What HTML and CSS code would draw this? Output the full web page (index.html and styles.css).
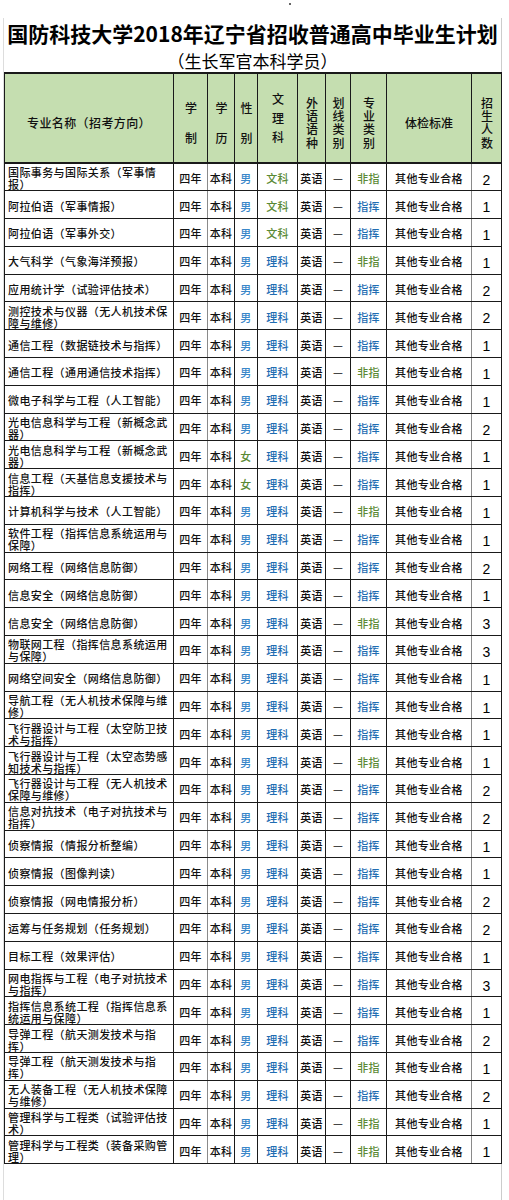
FILE: index.html
```html
<!DOCTYPE html>
<html lang="zh-CN">
<head>
<meta charset="utf-8">
<title>国防科技大学2018年辽宁省招收普通高中毕业生计划</title>
<link rel="stylesheet" href="styles.css">
</head>
<body>
<div class="topbar"><span class="dot"></span></div>
<div class="sheet">
  <h1 class="title">国防科技大学2018年辽宁省招收普通高中毕业生计划</h1>
  <p class="subtitle">（生长军官本科学员）</p>
  <table class="plan">
    <colgroup>
      <col class="c-name"><col class="c-len"><col class="c-deg"><col class="c-sex"><col class="c-subj">
      <col class="c-lang"><col class="c-line"><col class="c-type"><col class="c-med"><col class="c-num">
    </colgroup>
    <thead>
      <tr>
        <th class="h-name">专业名称（招考方向）</th>
        <th><span class="vt wide">学制</span></th>
        <th><span class="vt wide">学历</span></th>
        <th><span class="vt wide">性别</span></th>
        <th><span class="vt three">文理科</span></th>
        <th><span class="vt four">外语语种</span></th>
        <th><span class="vt four">划线类别</span></th>
        <th><span class="vt four">专业类别</span></th>
        <th>体检标准</th>
        <th><span class="vt four">招生人数</span></th>
      </tr>
    </thead>
    <tbody>
      <tr><td class="name">国际事务与国际关系（军事情报）</td><td>四年</td><td>本科</td><td class="m">男</td><td class="g">文科</td><td>英语</td><td>—</td><td class="g">非指</td><td>其他专业合格</td><td class="num">2</td></tr>
      <tr><td class="name">阿拉伯语（军事情报）</td><td>四年</td><td>本科</td><td class="m">男</td><td class="g">文科</td><td>英语</td><td>—</td><td class="b">指挥</td><td>其他专业合格</td><td class="num">1</td></tr>
      <tr><td class="name">阿拉伯语（军事外交）</td><td>四年</td><td>本科</td><td class="m">男</td><td class="g">文科</td><td>英语</td><td>—</td><td class="b">指挥</td><td>其他专业合格</td><td class="num">1</td></tr>
      <tr><td class="name">大气科学（气象海洋预报）</td><td>四年</td><td>本科</td><td class="m">男</td><td class="b">理科</td><td>英语</td><td>—</td><td class="g">非指</td><td>其他专业合格</td><td class="num">1</td></tr>
      <tr><td class="name">应用统计学（试验评估技术）</td><td>四年</td><td>本科</td><td class="m">男</td><td class="b">理科</td><td>英语</td><td>—</td><td class="b">指挥</td><td>其他专业合格</td><td class="num">2</td></tr>
      <tr><td class="name">测控技术与仪器（无人机技术保障与维修）</td><td>四年</td><td>本科</td><td class="m">男</td><td class="b">理科</td><td>英语</td><td>—</td><td class="b">指挥</td><td>其他专业合格</td><td class="num">2</td></tr>
      <tr><td class="name">通信工程（数据链技术与指挥）</td><td>四年</td><td>本科</td><td class="m">男</td><td class="b">理科</td><td>英语</td><td>—</td><td class="b">指挥</td><td>其他专业合格</td><td class="num">1</td></tr>
      <tr><td class="name">通信工程（通用通信技术指挥）</td><td>四年</td><td>本科</td><td class="m">男</td><td class="b">理科</td><td>英语</td><td>—</td><td class="g">非指</td><td>其他专业合格</td><td class="num">1</td></tr>
      <tr><td class="name">微电子科学与工程（人工智能）</td><td>四年</td><td>本科</td><td class="m">男</td><td class="b">理科</td><td>英语</td><td>—</td><td class="b">指挥</td><td>其他专业合格</td><td class="num">1</td></tr>
      <tr><td class="name">光电信息科学与工程（新概念武器）</td><td>四年</td><td>本科</td><td class="m">男</td><td class="b">理科</td><td>英语</td><td>—</td><td class="b">指挥</td><td>其他专业合格</td><td class="num">2</td></tr>
      <tr><td class="name">光电信息科学与工程（新概念武器）</td><td>四年</td><td>本科</td><td class="g">女</td><td class="b">理科</td><td>英语</td><td>—</td><td class="b">指挥</td><td>其他专业合格</td><td class="num">1</td></tr>
      <tr><td class="name">信息工程（天基信息支援技术与指挥）</td><td>四年</td><td>本科</td><td class="g">女</td><td class="b">理科</td><td>英语</td><td>—</td><td class="b">指挥</td><td>其他专业合格</td><td class="num">1</td></tr>
      <tr><td class="name">计算机科学与技术（人工智能）</td><td>四年</td><td>本科</td><td class="m">男</td><td class="b">理科</td><td>英语</td><td>—</td><td class="g">非指</td><td>其他专业合格</td><td class="num">1</td></tr>
      <tr><td class="name">软件工程（指挥信息系统运用与保障）</td><td>四年</td><td>本科</td><td class="m">男</td><td class="b">理科</td><td>英语</td><td>—</td><td class="b">指挥</td><td>其他专业合格</td><td class="num">1</td></tr>
      <tr><td class="name">网络工程（网络信息防御）</td><td>四年</td><td>本科</td><td class="m">男</td><td class="b">理科</td><td>英语</td><td>—</td><td class="b">指挥</td><td>其他专业合格</td><td class="num">2</td></tr>
      <tr><td class="name">信息安全（网络信息防御）</td><td>四年</td><td>本科</td><td class="m">男</td><td class="b">理科</td><td>英语</td><td>—</td><td class="b">指挥</td><td>其他专业合格</td><td class="num">1</td></tr>
      <tr><td class="name">信息安全（网络信息防御）</td><td>四年</td><td>本科</td><td class="m">男</td><td class="b">理科</td><td>英语</td><td>—</td><td class="g">非指</td><td>其他专业合格</td><td class="num">3</td></tr>
      <tr><td class="name">物联网工程（指挥信息系统运用与保障）</td><td>四年</td><td>本科</td><td class="m">男</td><td class="b">理科</td><td>英语</td><td>—</td><td class="b">指挥</td><td>其他专业合格</td><td class="num">3</td></tr>
      <tr><td class="name">网络空间安全（网络信息防御）</td><td>四年</td><td>本科</td><td class="m">男</td><td class="b">理科</td><td>英语</td><td>—</td><td class="b">指挥</td><td>其他专业合格</td><td class="num">1</td></tr>
      <tr><td class="name">导航工程（无人机技术保障与维修）</td><td>四年</td><td>本科</td><td class="m">男</td><td class="b">理科</td><td>英语</td><td>—</td><td class="b">指挥</td><td>其他专业合格</td><td class="num">1</td></tr>
      <tr><td class="name">飞行器设计与工程（太空防卫技术与指挥）</td><td>四年</td><td>本科</td><td class="m">男</td><td class="b">理科</td><td>英语</td><td>—</td><td class="b">指挥</td><td>其他专业合格</td><td class="num">1</td></tr>
      <tr><td class="name">飞行器设计与工程（太空态势感知技术与指挥）</td><td>四年</td><td>本科</td><td class="m">男</td><td class="b">理科</td><td>英语</td><td>—</td><td class="g">非指</td><td>其他专业合格</td><td class="num">1</td></tr>
      <tr><td class="name">飞行器设计与工程（无人机技术保障与维修）</td><td>四年</td><td>本科</td><td class="m">男</td><td class="b">理科</td><td>英语</td><td>—</td><td class="b">指挥</td><td>其他专业合格</td><td class="num">2</td></tr>
      <tr><td class="name">信息对抗技术（电子对抗技术与指挥）</td><td>四年</td><td>本科</td><td class="m">男</td><td class="b">理科</td><td>英语</td><td>—</td><td class="b">指挥</td><td>其他专业合格</td><td class="num">2</td></tr>
      <tr><td class="name">侦察情报（情报分析整编）</td><td>四年</td><td>本科</td><td class="m">男</td><td class="b">理科</td><td>英语</td><td>—</td><td class="b">指挥</td><td>其他专业合格</td><td class="num">1</td></tr>
      <tr><td class="name">侦察情报（图像判读）</td><td>四年</td><td>本科</td><td class="m">男</td><td class="b">理科</td><td>英语</td><td>—</td><td class="b">指挥</td><td>其他专业合格</td><td class="num">1</td></tr>
      <tr><td class="name">侦察情报（网电情报分析）</td><td>四年</td><td>本科</td><td class="m">男</td><td class="b">理科</td><td>英语</td><td>—</td><td class="b">指挥</td><td>其他专业合格</td><td class="num">2</td></tr>
      <tr><td class="name">运筹与任务规划（任务规划）</td><td>四年</td><td>本科</td><td class="m">男</td><td class="b">理科</td><td>英语</td><td>—</td><td class="b">指挥</td><td>其他专业合格</td><td class="num">2</td></tr>
      <tr><td class="name">目标工程（效果评估）</td><td>四年</td><td>本科</td><td class="m">男</td><td class="b">理科</td><td>英语</td><td>—</td><td class="b">指挥</td><td>其他专业合格</td><td class="num">1</td></tr>
      <tr><td class="name">网电指挥与工程（电子对抗技术与指挥）</td><td>四年</td><td>本科</td><td class="m">男</td><td class="b">理科</td><td>英语</td><td>—</td><td class="b">指挥</td><td>其他专业合格</td><td class="num">3</td></tr>
      <tr><td class="name">指挥信息系统工程（指挥信息系统运用与保障）</td><td>四年</td><td>本科</td><td class="m">男</td><td class="b">理科</td><td>英语</td><td>—</td><td class="b">指挥</td><td>其他专业合格</td><td class="num">1</td></tr>
      <tr><td class="name">导弹工程（航天测发技术与指挥）</td><td>四年</td><td>本科</td><td class="m">男</td><td class="b">理科</td><td>英语</td><td>—</td><td class="b">指挥</td><td>其他专业合格</td><td class="num">2</td></tr>
      <tr><td class="name">导弹工程（航天测发技术与指挥）</td><td>四年</td><td>本科</td><td class="m">男</td><td class="b">理科</td><td>英语</td><td>—</td><td class="g">非指</td><td>其他专业合格</td><td class="num">1</td></tr>
      <tr><td class="name">无人装备工程（无人机技术保障与维修）</td><td>四年</td><td>本科</td><td class="m">男</td><td class="b">理科</td><td>英语</td><td>—</td><td class="b">指挥</td><td>其他专业合格</td><td class="num">2</td></tr>
      <tr><td class="name">管理科学与工程类（试验评估技术）</td><td>四年</td><td>本科</td><td class="m">男</td><td class="b">理科</td><td>英语</td><td>—</td><td class="g">非指</td><td>其他专业合格</td><td class="num">1</td></tr>
      <tr><td class="name">管理科学与工程类（装备采购管理）</td><td>四年</td><td>本科</td><td class="m">男</td><td class="b">理科</td><td>英语</td><td>—</td><td class="g">非指</td><td>其他专业合格</td><td class="num">1</td></tr>
    </tbody>
  </table>
</div>
</body>
</html>
```

FILE: styles.css
```css
html, body {
  margin: 0;
  padding: 0;
  background: #ffffff;
}

body {
  font-family: "Noto Sans CJK SC", "Noto Sans", sans-serif;
  color: #111111;
}

.topbar {
  height: 8px;
  display: flex;
  align-items: flex-start;
}

.dot {
  width: 2px;
  height: 2px;
  margin-left: 289px;
  margin-top: 3px;
  background: #333333;
  border-radius: 1px;
}

.sheet {
  margin-left: 3px;
  width: 497px;
  min-height: 1192px;
  border-left: 1px solid #dddddd;
  border-right: 1px solid #cccccc;
}

.title {
  margin: 10px 0 0;
  font-size: 21px;
  line-height: 31px;
  font-weight: 700;
  text-align: center;
  color: #000000;
  white-space: nowrap;
}

.subtitle {
  margin: 0 0 -1px;
  font-size: 17px;
  line-height: 24px;
  font-weight: 400;
  text-align: center;
  color: #000000;
}

.plan {
  border-collapse: collapse;
  table-layout: fixed;
  width: 497px;
  border-top: 2px solid #1a1a1a;
}

.c-name { width: 169px; }
.c-len { width: 34px; }
.c-deg { width: 27px; }
.c-sex { width: 23px; }
.c-subj { width: 40px; }
.c-lang { width: 28px; }
.c-line { width: 25px; }
.c-type { width: 36px; }
.c-med { width: 85px; }
.c-num { width: 30px; }

.plan thead tr {
  height: 86px;
}

.plan th {
  background: #c5deb0;
  border: 1px solid #1a1a1a;
  border-bottom: 2px solid #1a1a1a;
  padding: 10px 0 0;
  font-size: 12px;
  font-weight: 500;
  color: #111111;
  vertical-align: middle;
  text-align: center;
  line-height: 16px;
}

.plan th.h-name {
  letter-spacing: 0.4px;
}

.vt {
  display: inline-block;
  writing-mode: vertical-rl;
  text-orientation: upright;
  line-height: 14px;
  vertical-align: middle;
}

.vt.wide {
  letter-spacing: 18px;
  margin-top: 18px;
}

.vt.three {
  letter-spacing: 7px;
  margin-top: -4px;
}

.vt.four {
  letter-spacing: 1.4px;
  margin-top: 2px;
}

.plan tbody tr {
  height: 27.8px;
}

.plan td {
  border: 1px solid #1a1a1a;
  padding: 3px 0 0;
  font-size: 11px;
  font-weight: 500;
  line-height: 13px;
  text-align: center;
  vertical-align: middle;
  white-space: nowrap;
  letter-spacing: 0.3px;
  color: #111111;
}

.plan td:nth-child(2),
.plan td:nth-child(9) {
  border-right-color: #8a8a8a;
}

.plan td.name {
  text-align: left;
  white-space: normal;
  overflow: hidden;
  padding: 2px 4px 0 3px;
  line-height: 12px;
  letter-spacing: 0.4px;
}

.plan td.num {
  font-family: "Liberation Sans", Arial, sans-serif;
  font-size: 14px;
  font-weight: 400;
  line-height: 16px;
  padding-top: 5px;
  letter-spacing: 0;
  color: #000000;
}

.plan td.m {
  color: #3a87c9;
}

.plan td.b {
  color: #1f6db2;
}

.plan td.g {
  color: #5b8a35;
}
```
